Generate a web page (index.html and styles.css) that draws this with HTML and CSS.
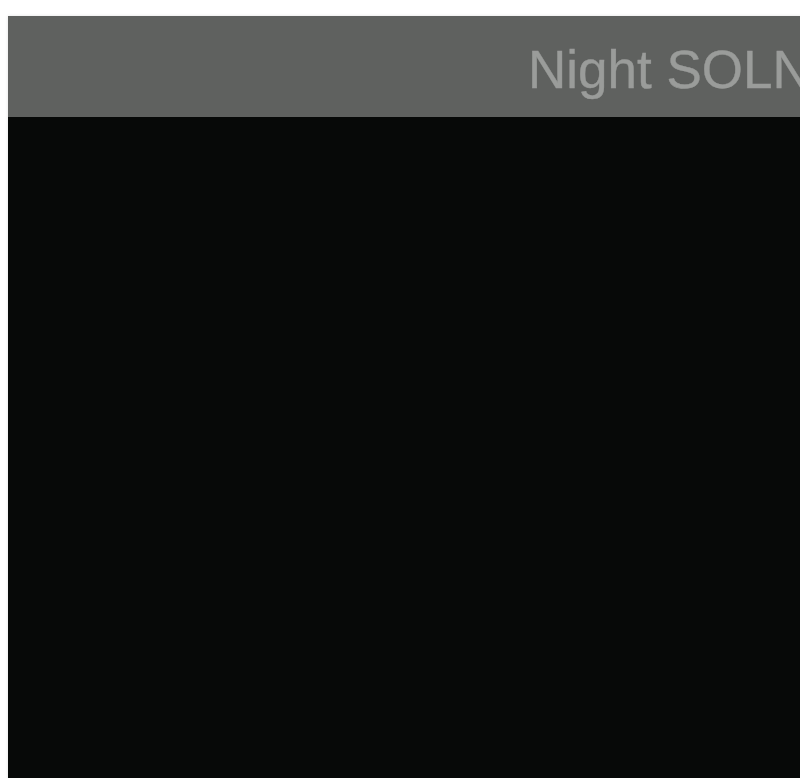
FILE: index.html
```html
<!DOCTYPE html>
<html>
<head>
<meta charset="utf-8">
<link rel="stylesheet" href="styles.css">
</head>
<body>
<div class="panel">
  <div class="header"><span class="title">Night SOLNS</span></div>
  <div class="screen"></div>
</div>
</body>
</html>
```
FILE: styles.css
```css
html, body {
  margin: 0;
  padding: 0;
  background: #ffffff;
  overflow: hidden;
}
body {
  padding: 16px 0 0 8px;
}
.panel {
  width: 820px;
  height: 780px;
  display: flex;
  flex-direction: column;
  box-shadow: 0 0 3px rgba(0,0,0,0.12);
}
.header {
  height: 101px;
  box-sizing: border-box;
  padding-top: 5px;
  background: #5f615f;
  display: flex;
  align-items: center;
  padding-left: 520px;
  white-space: nowrap;
  overflow: hidden;
}
.title {
  font-family: "Liberation Sans", Arial, sans-serif;
  font-size: 53px;
  color: #9a9c9a;
  line-height: 1;
  -webkit-text-stroke: 0.4px #9a9c9a;
}
.screen {
  flex: 1;
  background: #070908;
}
```
